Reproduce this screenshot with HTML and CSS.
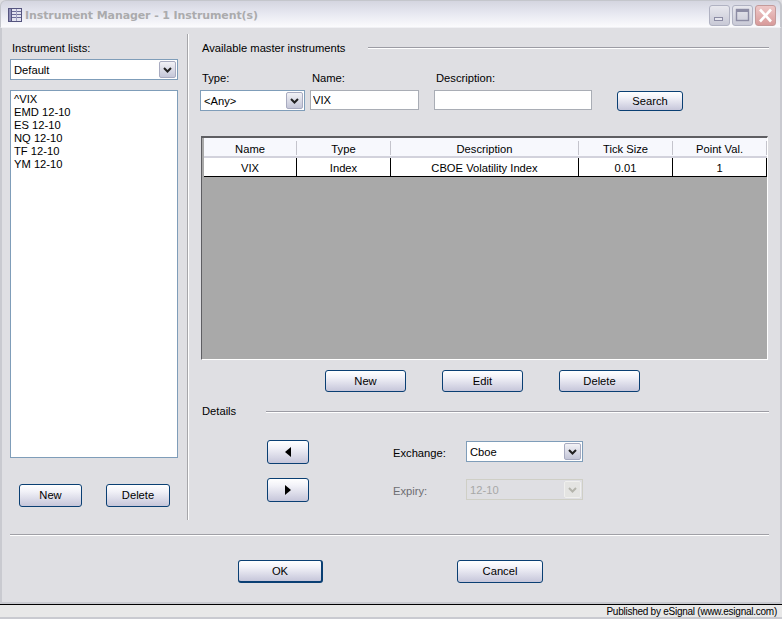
FILE: index.html
```html
<!DOCTYPE html>
<html lang="en">
<head>
    <meta charset="UTF-8">
    <title>Instrument Manager</title>
    <link rel="stylesheet" href="styles.css">
</head>
<body>

<div class="window">
    <div class="titlebar">
        <svg class="title-icon" width="16" height="16" viewBox="0 0 16 16">
            <rect x="1.5" y="1.5" width="3" height="13" fill="#8f8fb8" stroke="#55557f"/>
            <rect x="4.5" y="1.5" width="10" height="13" fill="#e4e4f0" stroke="#55557f"/>
            <path d="M5 4.5h9M5 7.5h9M5 10.5h9" stroke="#6c6c98"/>
            <path d="M9.5 2v12" stroke="#a0a0c0"/>
        </svg>
        <span class="title-text">Instrument Manager - 1 Instrument(s)</span>
        <div class="win-buttons">
            <div class="win-btn">
                <svg width="19" height="19" viewBox="0 0 19 19"><rect x="4.5" y="11.5" width="8" height="3" fill="#e6e6ee" stroke="#8c8ca4"/></svg>
            </div>
            <div class="win-btn">
                <svg width="19" height="19" viewBox="0 0 19 19"><rect x="3.5" y="3.5" width="12" height="11" fill="none" stroke="#8c8ca4" stroke-width="1.4"/><path d="M3.5 5h12" stroke="#8c8ca4" stroke-width="2"/></svg>
            </div>
            <div class="win-btn win-close">
                <svg width="19" height="19" viewBox="0 0 19 19"><path d="M4 3.5l11 12M15 3.5l-11 12" stroke="#fff" stroke-width="2.6"/></svg>
            </div>
        </div>
    </div>

    <div class="client">
        <div class="panes">
            <div class="left-pane">
                <div class="label label-lists">Instrument lists:</div>
                <div class="combo combo-list">
                    <span class="combo-value">Default</span>
                    <span class="combo-btn"><svg width="9" height="6" viewBox="0 0 9 6"><path d="M1 1l3.5 3.5L8 1" fill="none" stroke="#222" stroke-width="2"/></svg></span>
                </div>
                <div class="listbox">
                    <div>^VIX</div>
                    <div>EMD 12-10</div>
                    <div>ES 12-10</div>
                    <div>NQ 12-10</div>
                    <div>TF 12-10</div>
                    <div>YM 12-10</div>
                </div>
                <div class="left-actions">
                    <button class="btn btn-new-list">New</button>
                    <button class="btn btn-del-list">Delete</button>
                </div>
            </div>

            <div class="divider"></div>

            <div class="right-pane">
                <div class="section-head">
                    <span class="label">Available master instruments</span>
                    <span class="rule rule-master"></span>
                </div>

                <div class="search-row">
                    <div class="field field-type">
                        <div class="label">Type:</div>
                        <div class="combo combo-type">
                            <span class="combo-value">&lt;Any&gt;</span>
                            <span class="combo-btn"><svg width="9" height="6" viewBox="0 0 9 6"><path d="M1 1l3.5 3.5L8 1" fill="none" stroke="#222" stroke-width="2"/></svg></span>
                        </div>
                    </div>
                    <div class="field field-name">
                        <div class="label">Name:</div>
                        <input class="textbox textbox-name" value="VIX">
                    </div>
                    <div class="field field-desc">
                        <div class="label">Description:</div>
                        <input class="textbox textbox-desc" value="">
                    </div>
                    <button class="btn btn-search">Search</button>
                </div>

                <div class="grid">
                    <div class="grid-row grid-header">
                        <div class="col-name">Name</div>
                        <div class="col-type">Type</div>
                        <div class="col-desc">Description</div>
                        <div class="col-tick">Tick Size</div>
                        <div class="col-point">Point Val.</div>
                    </div>
                    <div class="grid-row grid-data">
                        <div class="col-name">VIX</div>
                        <div class="col-type">Index</div>
                        <div class="col-desc">CBOE Volatility Index</div>
                        <div class="col-tick">0.01</div>
                        <div class="col-point">1</div>
                    </div>
                </div>

                <div class="grid-actions">
                    <button class="btn btn-grid">New</button>
                    <button class="btn btn-grid">Edit</button>
                    <button class="btn btn-grid">Delete</button>
                </div>

                <div class="section-head details-head">
                    <span class="label">Details</span>
                    <span class="rule rule-details"></span>
                </div>

                <div class="details">
                    <div class="arrows">
                        <button class="btn btn-arrow"><svg width="6" height="10" viewBox="0 0 6 10"><path d="M6 0v10L0 5z" fill="#000"/></svg></button>
                        <button class="btn btn-arrow"><svg width="6" height="10" viewBox="0 0 6 10"><path d="M0 0v10l6-5z" fill="#000"/></svg></button>
                    </div>
                    <div class="detail-fields">
                        <div class="detail-row">
                            <span class="label detail-label">Exchange:</span>
                            <div class="combo combo-detail">
                                <span class="combo-value">Cboe</span>
                                <span class="combo-btn"><svg width="9" height="6" viewBox="0 0 9 6"><path d="M1 1l3.5 3.5L8 1" fill="none" stroke="#222" stroke-width="2"/></svg></span>
                            </div>
                        </div>
                        <div class="detail-row">
                            <span class="label detail-label is-disabled">Expiry:</span>
                            <div class="combo combo-detail combo-disabled">
                                <span class="combo-value">12-10</span>
                                <span class="combo-btn"><svg width="9" height="6" viewBox="0 0 9 6"><path d="M1 1l3.5 3.5L8 1" fill="none" stroke="#b4b4ac" stroke-width="2"/></svg></span>
                            </div>
                        </div>
                    </div>
                </div>
            </div>
        </div>

        <div class="separator"></div>

        <div class="footer">
            <button class="btn btn-footer btn-ok">OK</button>
            <button class="btn btn-footer">Cancel</button>
        </div>
    </div>

    <div class="statusbar">Published by eSignal (www.esignal.com)</div>
</div>

</body>
</html>
```

FILE: styles.css
```css
* {
    box-sizing: border-box;
}
body {
    margin: 0;
    font-family: "Liberation Sans", Arial, sans-serif;
    font-size: 11.2px;
    color: #000;
    background-color: #dfdfe3;
}
.window {
    width: 782px;
    height: 619px;
    display: flex;
    flex-direction: column;
    overflow: hidden;
}
.titlebar {
    height: 28px;
    flex: none;
    display: flex;
    align-items: center;
    padding: 2px 4px 0 6px;
    background: linear-gradient(#d4d5e0, #e6e7f0 45%, #fbfbfd);
    border-top: 1px solid #c4c6cc;
    border-left: 1px solid #c4c6cc;
    border-right: 2px solid #c4c6cc;
    border-bottom: 1px solid #f0f0f4;
    border-radius: 6px 6px 0 0;
}
.title-text {
    margin-left: 2px;
    font-family: "DejaVu Sans", Verdana, sans-serif;
    font-weight: bold;
    font-size: 11px;
    letter-spacing: -0.1px;
    color: #ababad;
    white-space: nowrap;
}
.win-buttons {
    margin-left: auto;
    display: flex;
    gap: 2px;
}
.win-btn {
    width: 21px;
    height: 21px;
    border: 1px solid #b0b2c2;
    border-radius: 3px;
    background: linear-gradient(#e8e8ee, #c8c9d6);
    display: flex;
    align-items: center;
    justify-content: center;
}
.win-close {
    background: linear-gradient(#eec8c8, #d89a9a);
    border-color: #c49a9a;
}
.client {
    flex: 1;
    display: flex;
    flex-direction: column;
    padding-left: 8px;
    border-left: 2px solid #c9cad0;
    border-right: 2px solid #c9cad0;
    border-bottom: 2px solid #c9cad0;
    min-height: 0;
}
.panes {
    height: 486px;
    margin-top: 6px;
    display: flex;
    flex: none;
}
.label {
    line-height: 14px;
    white-space: nowrap;
}
.label-lists {
    margin-left: 2px;
}
.left-pane {
    width: 168px;
    padding-top: 7px;
    flex: none;
}
.combo {
    height: 21px;
    display: flex;
    align-items: center;
    background-color: #fff;
    border: 1px solid #7f9db9;
    padding: 1px;
}
.combo-value {
    flex: 1;
    padding-left: 2px;
}
.combo-btn {
    width: 17px;
    height: 100%;
    display: flex;
    align-items: center;
    justify-content: center;
    border: 1px solid #a8abc0;
    border-radius: 2px;
    background: linear-gradient(#f2f2f6, #c4c6d8);
}
.combo-list {
    margin-top: 4px;
}
.listbox {
    height: 368px;
    margin-top: 10px;
    padding: 2px 3px;
    background-color: #fff;
    border: 1px solid #7f9db9;
    line-height: 13px;
}
.left-actions {
    display: flex;
    margin-top: 26px;
    padding-left: 9px;
}
.btn {
    display: flex;
    align-items: center;
    justify-content: center;
    padding: 0 0 1px;
    font-family: inherit;
    font-size: 11.2px;
    color: #000;
    border: 1px solid #0a3f73;
    border-radius: 3px;
    background: linear-gradient(#fff, #f2f2f8 30%, #c6c6da);
}
.btn-new-list {
    width: 63px;
    height: 23px;
}
.btn-del-list {
    width: 64px;
    height: 23px;
    margin-left: 24px;
}
.divider {
    width: 2px;
    margin-left: 9px;
    flex: none;
    background-color: #a6a6aa;
    border-right: 1px solid #fff;
}
.right-pane {
    width: 568px;
    margin-left: 12px;
    flex: none;
    padding-top: 7px;
}
.section-head {
    display: flex;
    align-items: center;
    margin-left: 1px;
}
.rule {
    height: 2px;
    background-color: #9c9ca4;
    border-bottom: 1px solid #fff;
}
.rule-master {
    width: 402px;
    margin-left: 23px;
}
.search-row {
    display: flex;
    align-items: flex-start;
    margin-top: 16px;
    margin-left: -1px;
}
.field .label {
    margin-left: 2px;
}
.field-type {
    width: 105px;
}
.combo-type {
    width: 105px;
    margin-top: 5px;
    border-color: #7f9db9;
}
.field-name {
    margin-left: 5px;
}
.field-desc {
    margin-left: 15px;
}
.textbox {
    display: block;
    height: 20px;
    margin-top: 5px;
    padding: 0 2px;
    font-family: inherit;
    font-size: 11.2px;
    color: #000;
    background-color: #fff;
    border: 1px solid #a9adb5;
    outline: none;
}
.textbox-name {
    width: 109px;
}
.textbox-desc {
    width: 158px;
}
.btn-search {
    width: 66px;
    height: 20px;
    margin-top: 20px;
    margin-left: 25px;
}
.grid {
    width: 567px;
    height: 224px;
    margin-top: 25px;
    padding: 0 0 0 2px;
    background-color: #a9a9a9;
    border-top: 2px solid #5e5e62;
    border-left: 1px solid #5e5e62;
    border-right: 1px solid #fff;
    border-bottom: 1px solid #fff;
}
.grid-row {
    display: flex;
    width: 563px;
    text-align: center;
}
.col-name {
    width: 93px;
}
.col-type {
    width: 94px;
}
.col-desc {
    width: 188px;
}
.col-tick {
    width: 94px;
}
.col-point {
    width: 94px;
}
.grid-header {
    height: 20px;
    background-color: #f7f8fd;
    border-bottom: 2px solid #d2d2dc;
}
.grid-header div {
    height: 14px;
    line-height: 17px;
    margin-top: 3px;
    border-right: 1px solid #c4c4cc;
}
.grid-data {
    height: 19px;
    line-height: 20px;
    background-color: #fff;
    border-bottom: 1px solid #000;
}
.grid-data div {
    border-right: 1px solid #000;
}
.grid-actions {
    display: flex;
    gap: 36px;
    margin-top: 10px;
    margin-left: 124px;
}
.btn-grid {
    width: 81px;
    height: 22px;
}
.details-head {
    margin-top: 12px;
}
.rule-details {
    width: 503px;
    margin-left: 30px;
    margin-top: 2px;
}
.details {
    display: flex;
    margin-top: 22px;
    margin-left: 66px;
}
.arrows {
    width: 42px;
    display: flex;
    flex-direction: column;
    gap: 14px;
}
.btn-arrow {
    width: 42px;
    height: 24px;
}
.detail-fields {
    margin-left: 84px;
    display: flex;
    flex-direction: column;
    gap: 17px;
    padding-top: 1px;
}
.detail-row {
    display: flex;
    align-items: center;
}
.detail-label {
    width: 73px;
    padding-top: 3px;
}
.is-disabled {
    color: #6d6d72;
}
.combo-detail {
    width: 117px;
}
.combo-disabled {
    background-color: #dfdfe3;
    border-color: #cfcfc6;
    color: #a8a8a8;
}
.combo-disabled .combo-btn {
    background: #e4e4e2;
    border-color: #f0f0ee;
}
.separator {
    width: 759px;
    height: 2px;
    margin-top: 14px;
    background-color: #a0a0a6;
    border-bottom: 1px solid #fff;
}
.footer {
    display: flex;
    gap: 134px;
    margin-top: 24px;
    margin-left: 228px;
}
.btn-footer {
    width: 85px;
    height: 23px;
}
.btn-footer:last-child {
    width: 86px;
}
.btn-ok {
    border-width: 1px 2px 2px 1px;
}
.statusbar {
    height: 15px;
    flex: none;
    padding-right: 5px;
    text-align: right;
    font-size: 10px;
    letter-spacing: -0.25px;
    line-height: 13px;
    background-color: #e8e8e8;
    border-top: 1px solid #000;
    border-bottom: 2px solid #c9cad0;
}
```
